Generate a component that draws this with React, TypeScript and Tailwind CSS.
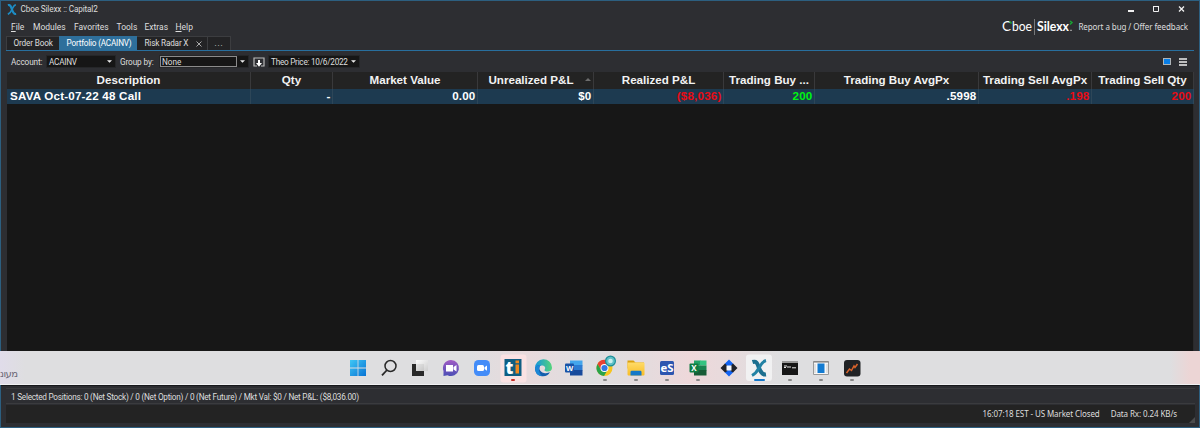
import { ReactNode } from "react";

const columns = [
    { title: "Description", value: "SAVA Oct-07-22 48 Call", width: "w-[244px]", color: "text-white", align: "text-left" },
    { title: "Qty", value: "-", width: "w-[82px]", color: "text-white", align: "text-right" },
    { title: "Market Value", value: "0.00", width: "w-[145px]", color: "text-white", align: "text-right" },
    { title: "Unrealized P&L", value: "$0", width: "w-[116px]", color: "text-white", align: "text-right", sorted: true },
    { title: "Realized P&L", value: "($8,036)", width: "w-[130px]", color: "text-[#e80b14]", align: "text-right" },
    { title: "Trading Buy ...", value: "200", width: "w-[91px]", color: "text-[#00f411]", align: "text-right" },
    { title: "Trading Buy AvgPx", value: ".5998", width: "w-[164px]", color: "text-white", align: "text-right" },
    { title: "Trading Sell AvgPx", value: ".198", width: "w-[113px]", color: "text-[#e80b14]", align: "text-right" },
    { title: "Trading Sell Qty", value: "200", width: "w-[102px]", color: "text-[#e80b14]", align: "text-right" },
];

const SilexxMark: React.FC<{ className: string }> = ({ className }) => (
    <svg className={className} viewBox="0 0 14 16" fill="none">
        <path d="M1 1.500C5 .5 5.800 4 7 8c1.200 4 2.500 7 6 6.500" stroke="currentColor" strokeWidth="3.200" />
        <path d="M12.500 1C9 2 8.500 5 7 8c-1.500 3.500-3 5.500-6 7" stroke="currentColor" strokeWidth="2.500" />
    </svg>
);

const Arrow: React.FC = () => (
    <svg className="w-[5px] h-[3px] shrink-0" viewBox="0 0 6 3"><path d="M0 0h6L3 3z" fill="#eee" /></svg>
);

const TitleBar: React.FC = () => (
    <div className="flex items-center h-4 pl-[6px] pr-[12px] text-[8.2px] text-[#dcdcdc]">
        <SilexxMark className="w-[10px] h-[11px] text-[#1d8cc4]" />
        <span className="ml-[3.5px] tracking-[-0.14px]">Cboe Silexx :: Capital2</span>
        <svg className="ml-auto w-[60px] h-[9px]" viewBox="0 0 60 9" fill="none" stroke="#f0f0f0">
            <path d="M1 6h6" strokeWidth="2" />
            <path d="M26.500 1.500h5v5h-5zM26 1.500h6" />
            <path d="M52 1.500l5 5m0-5l-5 5" strokeWidth="1.300" />
        </svg>
    </div>
);

const MenuBar: React.FC = () => (
    <div className="flex items-center h-[19px] pl-[10px] pr-[11px] text-[8.5px] text-[#dedede]">
        <ul className="flex items-center pt-px">
            <li className="w-[22px]"><span className="underline underline-offset-1">F</span>ile</li>
            <li className="w-[41px]">Modules</li>
            <li className="w-[42.5px]">Favorites</li>
            <li className="w-[28px]">Tools</li>
            <li className="w-[31px]">Extras</li>
            <li><span className="underline underline-offset-1">H</span>elp</li>
        </ul>
        <div className="ml-auto flex items-center">
            <svg className="w-[73px] h-[17px]" viewBox="0 0 73 17">
                <g fontFamily="Lato, sans-serif" fill="#fff">
                    <text x="0" y="13" fontSize="13" textLength="9" lengthAdjust="spacingAndGlyphs">C</text>
                    <text x="10" y="13" fontSize="12.500" textLength="20" lengthAdjust="spacingAndGlyphs">boe</text>
                    <text x="35" y="13" fontSize="12.500" fontWeight="700" textLength="32" lengthAdjust="spacingAndGlyphs">Silexx</text>
                </g>
                <path d="M32.500 1v16" stroke="#77797b" />
                <path d="M7.500 3.500l2 2" stroke="#16a832" strokeWidth="1.600" />
                <path d="M68 3l2 1.500-2 2" fill="none" stroke="#16a832" strokeWidth="1.400" />
                <path d="M68 12.300h2" stroke="#aaa" />
            </svg>
            <a href="#" className="ml-[3px] w-[110px] text-right font-['Noto_Sans',sans-serif] text-[8px] tracking-[-0.08px]">Report a bug / Offer feedback</a>
        </div>
    </div>
);

const Tabs: React.FC = () => (
    <div className="flex h-[15px] ml-[5px] mr-[5px] border-b border-[#286f9e] text-[8.2px] text-[#dedede]">
        <div className="w-[53px] pl-[6.5px] leading-[13px] bg-[#232325] border-l border-t border-[#3c3d40] tracking-[-0.15px]">Order Book</div>
        <div className="w-[78px] pl-[7.5px] leading-[14px] bg-[#2e6f9b] text-white tracking-[-0.2px]">Portfolio (ACAINV)</div>
        <div className="w-[71px] pl-[7.5px] pr-[5px] flex items-center bg-[#232325] border-r border-t border-[#3c3d40] tracking-[-0.18px]">
            Risk Radar X
            <svg className="ml-auto w-[6px] h-[6px]" viewBox="0 0 6 6"><path d="M.5.5l5 5m0-5l-5 5" stroke="#aaa" /></svg>
        </div>
        <div className="w-[23px] text-center leading-[13px] bg-[#232325] border-r border-t border-[#3c3d40] tracking-[0.8px]">...</div>
    </div>
);

const Toolbar: React.FC = () => (
    <div className="flex items-center h-[21px] pl-[10px] pr-[12px] text-[8.2px] text-[#dedede]">
        <span className="w-[35px] pt-px tracking-[-0.1px]">Account:</span>
        <div className="flex items-center justify-between w-[70px] h-[13px] pl-[2px] pr-[3px] bg-[#161616] border border-[#252628] tracking-[-0.25px]"><span className="pt-px">ACAINV</span><Arrow /></div>
        <span className="ml-[4px] pt-px w-[39px] tracking-[-0.1px]">Group by:</span>
        <div className="flex items-center w-[90px] h-[13px] bg-[#161616] border border-[#252628]">
            <div className="w-[77px] h-[11px] pl-px leading-[10px] border border-[#8b8b8b]">None</div>
            <span className="ml-[3px] flex"><Arrow /></span>
        </div>
        <svg className="ml-[4px] w-[12px] h-[10px]" viewBox="0 0 12 10" fill="none">
            <path d="M4 9H1V1h10v8H8" stroke="#b9b9b9" strokeWidth="1.200" />
            <path d="M6 3v4" stroke="#fff" strokeWidth="2" />
            <path d="M3 6h6L6 9.800z" fill="#fff" />
        </svg>
        <div className="ml-[3px] flex items-center justify-between w-[92px] h-[13px] pl-[2px] pr-[3px] bg-[#161616] border border-[#252628]">
            <span className="pt-px tracking-[-0.25px]">Theo Price: 10/6/2022</span><Arrow />
        </div>
        <div className="ml-auto w-[8px] h-[7px] bg-[#087de5] border border-[#aeb4b8]"></div>
        <svg className="ml-[8px] w-[8px] h-[8px]" viewBox="0 0 8 8"><path d="M0 1h8M0 4h8M0 7h8" stroke="#eee" strokeWidth="1.400" /></svg>
    </div>
);

const Grid: React.FC = () => (
    <div className="flex-1 ml-[6px] mr-[5px] bg-[#171717] border-r border-[#2a2a2b] font-['Liberation_Sans',sans-serif] font-bold text-[#f2f2f2]">
        <div className="flex h-[17px] bg-[#232323] text-[11.6px] leading-[15px]">
            {columns.map((c) => (
                <div key={c.title} className={`${c.width} flex shrink-0 items-center justify-center pb-[2px] border-r border-[#39393b] whitespace-nowrap`}>
                    {c.sorted && <span className="w-[9px] shrink-0"></span>}
                    <span className={c.sorted ? "mr-[11px] -ml-[1px]" : ""}>{c.title}</span>
                    {c.sorted && <svg className="w-[6px] h-[3px] shrink-0" viewBox="0 0 6 3"><path d="M0 3h6L3 0z" fill="#6d6d6d" /></svg>}
                </div>
            ))}
        </div>
        <div className="flex h-[15px] bg-[#1d3a50] text-[11.6px] tracking-[0.2px]">
            {columns.map((c) => (
                <div key={c.title} className={`${c.width} ${c.color} ${c.align} shrink-0 pl-[3px] pr-[1.5px] leading-[13px] border-r border-[#2d4658]`}>{c.value}</div>
            ))}
        </div>
    </div>
);

type AppProps = { children: ReactNode; running?: boolean; dot?: string };

const TaskIcon: React.FC<AppProps> = ({ children, running, dot = "bg-[#888] w-[4px]" }) => (
    <div className="flex flex-col items-center w-[30.85px] h-[32px] pt-[8px]">
        <svg className="w-[20px] h-[18px] shrink-0 overflow-visible" viewBox="0 0 20 18" fill="none">{children}</svg>
        {running && <span className={`relative mt-[2px] h-[2px] shrink-0 rounded-full ${dot}`}></span>}
    </div>
);

const Taskbar: React.FC = () => (
    <div className="flex h-[34px] bg-[linear-gradient(90deg,#e0dcea_0,#dedee0_25px,#dedee0_470px,#e8dadc_530px,#dedee0_590px,#e5dbdd_650px,#eed8da_690px,#dedee0_780px,#dedee0_1170px,#ecd5d5_1190px)] border-b border-[#f1f1f3]">
        <div className="w-[343px] pt-[15px] text-[10px] leading-[14px] text-[#6b6876] font-['Noto_Sans','DejaVu_Sans',sans-serif]">
            <span className="tracking-[-0.6px]" dir="rtl">מעונ</span>
        </div>
        <TaskIcon>
            <defs>
                <linearGradient id="win" x1="0" y1="0" x2="1" y2="1"><stop stopColor="#40c7f5" /><stop offset="1" stopColor="#0873d4" /></linearGradient>
                <linearGradient id="chat" x1="0" y1="0" x2="0" y2="1"><stop stopColor="#a15bc4" /><stop offset="1" stopColor="#4b4eb5" /></linearGradient>
                <linearGradient id="edge" x1="0" y1="0" x2="1" y2="0"><stop stopColor="#1595dc" /><stop offset="1" stopColor="#55d47a" /></linearGradient>
                <linearGradient id="view" x1="0" y1="0" x2="1" y2="1"><stop stopColor="#fff" /><stop offset="1" stopColor="#ccc" /></linearGradient>
                <linearGradient id="folder" x1="0" y1="0" x2="0" y2="1"><stop stopColor="#ffdb68" /><stop offset="1" stopColor="#f8bd27" /></linearGradient>
            </defs>
            <path d="M2 1h7.600v7.600H2zM10.400 1H18v7.600h-7.600zM2 9.400h7.600V17H2zM10.400 9.400H18V17h-7.600z" fill="url(#win)" />
        </TaskIcon>
        <TaskIcon>
            <circle cx="11.500" cy="7" r="5.500" stroke="#292929" strokeWidth="1.500" />
            <path d="M8 11l-5 5.300" stroke="#292929" strokeWidth="1.800" />
        </TaskIcon>
        <TaskIcon>
            <path d="M2 5h12v12H2z" fill="#292929" />
            <path d="M6 1h12v11H6z" fill="url(#view)" opacity=".92" />
        </TaskIcon>
        <TaskIcon>
            <path d="M10 1a8 8 0 1 1-3.500 15.200L2.500 17V12A8 8 0 0 1 10 1z" fill="url(#chat)" />
            <path d="M5 6h7v6.500H5zM12.500 8l3-2v6.500l-3-2z" fill="#fff" />
        </TaskIcon>
        <TaskIcon>
            <rect x="2" y="1" width="16" height="16" rx="4.500" fill="#438cf8" />
            <rect x="5" y="6" width="7" height="6" rx="1.500" fill="#fff" />
            <path d="M12.500 8.200L15 6.500v5.200l-2.500-1.700z" fill="#fff" />
        </TaskIcon>
        <TaskIcon running dot="bg-[#c52d24] w-[4px]">
            <rect x="-2.500" y="-4.500" width="26" height="28" rx="3" fill="#fae2e3" />
            <rect x="1.500" y="0" width="17" height="17" fill="#105e83" />
            <text x="2.500" y="14.500" fontFamily="Open Sans, sans-serif" fontSize="17" fontWeight="800" fill="#fff">t</text>
            <path d="M12.500 5.500h3.500v9h-3.500zM12.500 1.500h3.500v2.700h-3.500z" fill="#f08821" />
        </TaskIcon>
        <TaskIcon>
            <path d="M2 9a8.500 8.500 0 0 1 17-.5c0 3-2 4-4.500 4-3 0-3.500-1-2.500-2.500.8-2-1-3.500-3-3.500C5.500 6.500 3 8 2 9z" fill="url(#edge)" />
            <path d="M2 9c1-2 3-3 5.500-3C5.500 8 6 13 11 14c2.500.5 4.500 0 6-1a8 8 0 0 1-8 4.300C5 17 2 14 2 9z" fill="#155ead" />
            <path d="M2 9c1-2.500 4-3.500 6-3-3 2-2.500 8 1 11C5 17 2 14 2 9z" fill="#1c87d6" />
        </TaskIcon>
        <TaskIcon>
            <path d="M6 1.500h12.500v5H6z" fill="#43a6ec" />
            <path d="M6 6h12.500v5.500H6z" fill="#2b7cd3" />
            <path d="M6 11h12.500v5.500H6z" fill="#174a9c" />
            <rect x="1" y="4.500" width="9" height="9" rx="1" fill="#1853a7" />
            <text x="2" y="11.800" fontFamily="Open Sans, sans-serif" fontSize="7.500" fontWeight="700" fill="#fff">W</text>
        </TaskIcon>
        <TaskIcon running>
            <circle cx="9.500" cy="9" r="8" fill="#f7c51e" />
            <path d="M2.500 5A8 8 0 0 1 17 6H9.500L6 11z" fill="#e84234" />
            <path d="M2.500 5a8 8 0 0 0 6.500 12l3.500-6-3 2-4-3z" fill="#28a34a" />
            <circle cx="9.500" cy="9" r="4" fill="#fff" />
            <circle cx="9.500" cy="9" r="3.100" fill="#3479e5" />
            <circle cx="15.500" cy="2" r="5.500" fill="#1a8e98" />
            <circle cx="15.500" cy="2" r="4.300" fill="#5fc0c6" />
            <circle cx="15.500" cy="2" r="2.300" fill="#c9efee" />
        </TaskIcon>
        <TaskIcon running>
            <path d="M1.500 1.500h6l2 2H18v6H1.500z" fill="#dba10f" />
            <rect x="1.500" y="3.500" width="17" height="13" rx="1" fill="url(#folder)" />
            <path d="M4.500 16.500V13q0-1.200 1.200-1.200h8.600q1.200 0 1.200 1.200v3.500z" fill="#1579c8" />
        </TaskIcon>
        <TaskIcon running>
            <rect x="3" y="2" width="14" height="14" rx="1.500" fill="#2c56b0" />
            <text x="3.500" y="12.500" fontFamily="Open Sans, sans-serif" fontSize="10" fontWeight="700" fill="#fff" textLength="13" lengthAdjust="spacingAndGlyphs">eS</text>
        </TaskIcon>
        <TaskIcon running>
            <path d="M6 1.500h6.500v5H6z" fill="#21a366" />
            <path d="M12 1.500h6.500v5H12z" fill="#33c481" />
            <path d="M6 6.500h12.500v5H6z" fill="#168450" />
            <path d="M6 11h12.500v5.500H6z" fill="#185c37" />
            <rect x="1.500" y="4.500" width="9" height="9" rx="1" fill="#107c41" />
            <text x="3.300" y="11.800" fontFamily="Open Sans, sans-serif" fontSize="8" fontWeight="700" fill="#fff">X</text>
        </TaskIcon>
        <TaskIcon>
            <path d="M10 .5L14.500 5 10 9 5.500 5zM10 17.500L5.500 13l4.500-4 4.500 4z" fill="#1263f2" />
            <path d="M1.500 9L6 4.500v9zM18.500 9L14 4.500v9z" fill="#20232a" />
            <path d="M6 5.500l2-.5 6 0v4l-1 4H6z" fill="#1263f2" />
            <path d="M6 4.500l2.500 2.500v5L6 13.500zM14 4.500L11.500 7v5l2.500 1.500z" fill="#20232a" />
            <path d="M7.500 6.500h5v5h-5z" fill="#f4f6fa" />
        </TaskIcon>
        <TaskIcon running dot="bg-[#1477c8] w-[11px]">
            <rect x="-3" y="-4.500" width="26" height="26.500" rx="3" fill="#f1f1f2" />
            <path d="M3.500 3C8 1.500 8.500 5 10 9s3 7 7 6.500" stroke="#1c6f8f" strokeWidth="4" />
            <path d="M17 1.500c-4 1-5 4-7 7.500s-4 6-7 7.500" stroke="#2382a4" strokeWidth="3" />
        </TaskIcon>
        <TaskIcon running>
            <path d="M2 2h16v14H2z" fill="#161616" />
            <path d="M2 2h16v2H2z" fill="#999" />
            <path d="M4 7h3M4 8.500h2M8 7v2M10 7v2M12 8.800h4" stroke="#e8e8e8" />
        </TaskIcon>
        <TaskIcon running>
            <path d="M2.500 2.500h15v13h-15z" fill="#f7f7f7" stroke="#999" />
            <path d="M2.500 3h15" stroke="#777" />
            <path d="M6.500 4.500h7V14h-7z" fill="#137bd1" />
            <path d="M4 5v9M16 5v9" stroke="#ccc" />
        </TaskIcon>
        <TaskIcon running>
            <rect x="2" y="1" width="16.500" height="16.500" rx="3" fill="#202225" />
            <path d="M4.500 14l3-4 2 1.500L12 7l1 1.500L15.500 5" stroke="#da632b" strokeWidth="1.500" />
        </TaskIcon>
    </div>
);

const StatusArea: React.FC = () => (
    <div className="h-[43px] flex flex-col bg-[#2d2e32] border-x border-b border-[#2c5f80] text-[#dedede]">
        <div className="h-px bg-[#17181b]"></div>
        <div className="mt-[2px] ml-[5px] mr-[4px] h-[16px] pl-[5px] border-y border-[#3a3b3e] text-[8.2px] leading-[16px] tracking-[-0.24px]">
            1 Selected Positions: 0 (Net Stock) / 0 (Net Option) / 0 (Net Future) / Mkt Val: $0 / Net P&amp;L: ($8,036.00)
        </div>
        <div className="flex items-center justify-end ml-[5px] mr-[4px] mt-px h-[18px] pr-[18px] bg-[#232323] font-['Noto_Sans',sans-serif] text-[8px] tracking-[-0.1px] relative">
            <span className="-mt-px">16:07:18 EST - US Market Closed</span>
            <span className="ml-[11px] -mt-px">Data Rx: 0.24 KB/s</span>
            <svg className="absolute right-0 bottom-0 w-[6px] h-[6px]" viewBox="0 0 6 6"><path d="M6 0v6H0z" fill="#4b4b4c" /></svg>
        </div>
    </div>
);

const App: React.FC = () => {
    return (
        <div className="flex flex-col w-[1200px] h-[428px] overflow-hidden bg-[#2d2e32] font-['Roboto',sans-serif] whitespace-nowrap">
            <div className="flex flex-col h-[351px] border-x border-t border-[#2c5f80]">
                <TitleBar />
                <MenuBar />
                <Tabs />
                <Toolbar />
                <Grid />
            </div>
            <Taskbar />
            <StatusArea />
        </div>
    );
};

export default App;
